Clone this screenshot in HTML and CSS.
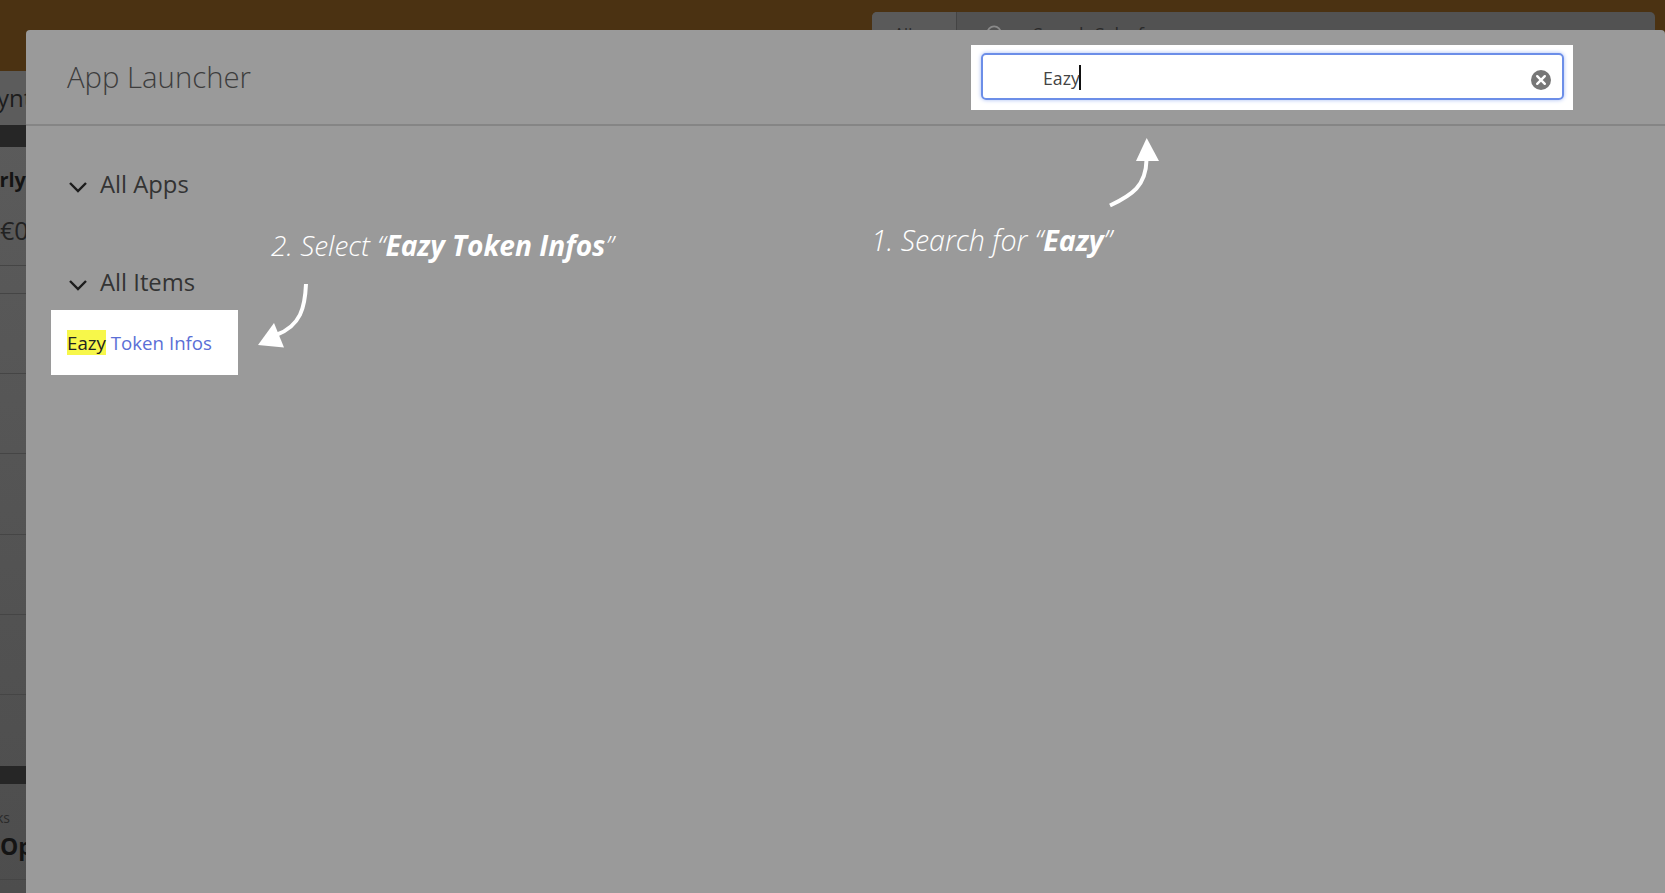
FILE: index.html
```html
<!DOCTYPE html>
<html lang="en">
<head>
<meta charset="utf-8">
<title>App Launcher</title>
<link rel="stylesheet" href="styles.css">
</head>
<body>
<div class="page">
  <header class="topbar">
    <div class="globalsearch">
      <span class="gs-scope">All</span>
      <span class="gs-field">
        <svg class="gs-icon" viewBox="0 0 20 20"><circle cx="9" cy="9" r="7.5" fill="none" stroke="#8a8a8a" stroke-width="2"/></svg>
        <span>Search Salesforce</span>
      </span>
    </div>
  </header>
  <aside class="strip">
    <div class="s-tab">ynt</div>
    <div class="s-dark"></div>
    <div class="s-name">rly</div>
    <div class="s-price">€0</div>
    <div class="s-row s-r1"></div>
    <div class="s-row s-r2"></div>
    <div class="s-row s-r2"></div>
    <div class="s-row s-r3"></div>
    <div class="s-row s-r2"></div>
    <div class="s-row s-r2"></div>
    <div class="s-row s-r4"></div>
    <div class="s-dark2"></div>
    <div class="s-small">ks</div>
    <div class="s-open">Op</div>
    <div class="s-row"></div>
  </aside>
</div>

<section class="modal">
  <div class="modal-head">
    <h1 class="modal-title">App Launcher</h1>
    <div class="search-hl">
      <div class="search-box">
        <span class="search-text">Eazy</span><span class="caret"></span>
        <svg class="clear" viewBox="0 0 20 20"><circle cx="10" cy="10" r="10" fill="#777"/><path d="M6.2 6.2l7.6 7.6M13.8 6.2l-7.6 7.6" stroke="#fff" stroke-width="2.4" stroke-linecap="round"/></svg>
      </div>
    </div>
  </div>
  <div class="modal-body">
    <div class="group group-apps">
      <svg class="chev" viewBox="0 0 18 12"><path d="M1 2l8 8 8-8" fill="none" stroke="#1c1c1c" stroke-width="2.4"/></svg>
      <span>All Apps</span>
    </div>
    <div class="group group-items">
      <svg class="chev" viewBox="0 0 18 12"><path d="M1 2l8 8 8-8" fill="none" stroke="#1c1c1c" stroke-width="2.4"/></svg>
      <span>All Items</span>
    </div>
    <div class="item-hl"><a class="item"><mark>Eazy</mark> Token Infos</a></div>
  </div>
</section>

<p class="note note-2">2. Select “<b>Eazy Token Infos</b>”</p>
<svg class="arrow arrow-2" viewBox="0 0 60 70"><path d="M49 1C48 24 44 43 19 52" fill="none" stroke="#fff" stroke-width="4"/><path d="M1 62L27 64.5L17 40Z" fill="#fff"/></svg>
<p class="note note-1">1. Search for “<b>Eazy</b>”</p>
<svg class="arrow arrow-1" viewBox="0 0 60 80"><path d="M2 69.5C24 59 38 50 38.5 24" fill="none" stroke="#fff" stroke-width="4"/><path d="M38.7 2L28 25L51 25Z" fill="#fff"/></svg>
</body>
</html>
```
FILE: styles.css
```css
* { box-sizing: border-box; }
html, body { margin: 0; height: 100%; overflow: hidden; background: #4f4f4f; }
body { font-family: "Open Sans", sans-serif; position: relative; }

.page { height: 893px; display: flex; flex-direction: column; }
.topbar { height: 71px; background: #4b3212; display: flex; justify-content: flex-end; padding: 12px 10px 0 0; flex: none; }
.globalsearch { width: 783px; height: 40px; background: #525252; border-radius: 5px 5px 0 0; display: flex; color: #2a2a2a; font-size: 18px; line-height: 24px; }
.gs-scope { width: 85px; padding: 10px 0 0 22px; background: #5a5a5a; border-right: 1px solid #444; border-radius: 5px 0 0 0; font-size: 16px; }
.gs-field { display: flex; gap: 29px; padding: 10px 0 0 29px; }
.gs-icon { width: 18px; height: 18px; margin-top: 3px; }

.strip { width: 26px; flex: 1; overflow: hidden; background: linear-gradient(#5c5c5c, #4d4d4d); white-space: nowrap; color: #141414; }
.s-tab { height: 54px; background: #5c5c5c; font-size: 24px; line-height: 54px; margin-left: -3px; color: #1c1c1c; }
.s-dark { height: 22px; background: #262626; }
.s-name { height: 57px; padding-top: 16px; font-size: 20px; font-weight: 700; line-height: 34px; direction: rtl; }
.s-price { height: 61px; font-size: 25px; line-height: 52px; color: #222; }
.s-row { border-top: 1px solid #454545; }
.s-r1 { height: 28px; }
.s-r2 { height: 80px; }
.s-r3 { height: 81px; }
.s-r4 { height: 72px; }
.s-dark2 { height: 18px; background: #262626; }
.s-small { font-size: 14px; line-height: 20px; padding-top: 24px; color: #2a2a2a; height: 47px; margin-left: -4px; }
.s-open { height: 48px; font-size: 23px; font-weight: 700; line-height: 30px; }

.modal { position: absolute; left: 26px; top: 30px; right: 0; bottom: 0; background: #9a9a9a; border-radius: 4px 4px 0 0; }
.modal-head { height: 96px; border-bottom: 2px solid #858585; display: flex; align-items: flex-start; justify-content: space-between; padding: 15px 92px 0 41px; }
.modal-title { margin: 16px 0 0; font-size: 29.3px; font-weight: 300; line-height: 32px; color: #3d3d3d; }
.search-hl { width: 602px; height: 65px; background: #fff; padding: 8px 9px 10px 10px; }
.search-box { height: 47px; border: 2px solid #6c8ee8; border-radius: 5px; box-shadow: 0 0 4px #a9bdf3; display: flex; align-items: center; padding: 2px 11px 0 60px; font-size: 17.7px; color: #444; }
.caret { width: 2px; height: 25px; background: #111; margin-left: -1px; }
.clear { width: 20px; height: 20px; margin-left: auto; margin-top: 5px; }

.modal-body { padding: 0 0 0 25px; }
.group { display: flex; align-items: center; gap: 13px; font-size: 23.8px; color: #333; line-height: 30px; padding-left: 18px; }
.chev { width: 18px; height: 12px; margin-top: 6px; }
.group-apps { margin-top: 43px; }
.group-items { margin-top: 68px; }
.item-hl { width: 187px; height: 65px; background: #fff; margin-top: 13px; padding: 18px 0 0 16px; }
.item { font-size: 18.7px; line-height: 30px; color: #5b6fd6; }
mark { background: #f7f74a; color: #222; }

.note { position: absolute; margin: 0; color: #fff; font-style: italic; font-weight: 300; line-height: 36px; white-space: nowrap; }
.note b { font-weight: 700; }
.note-1 { left: 871px; top: 222px; font-size: 28.6px; }
.note-2 { left: 271px; top: 227px; font-size: 28.1px; }
.arrow { position: absolute; }
.arrow-1 { left: 1108px; top: 136px; width: 60px; height: 80px; }
.arrow-2 { left: 257px; top: 283px; width: 60px; height: 70px; }
```
